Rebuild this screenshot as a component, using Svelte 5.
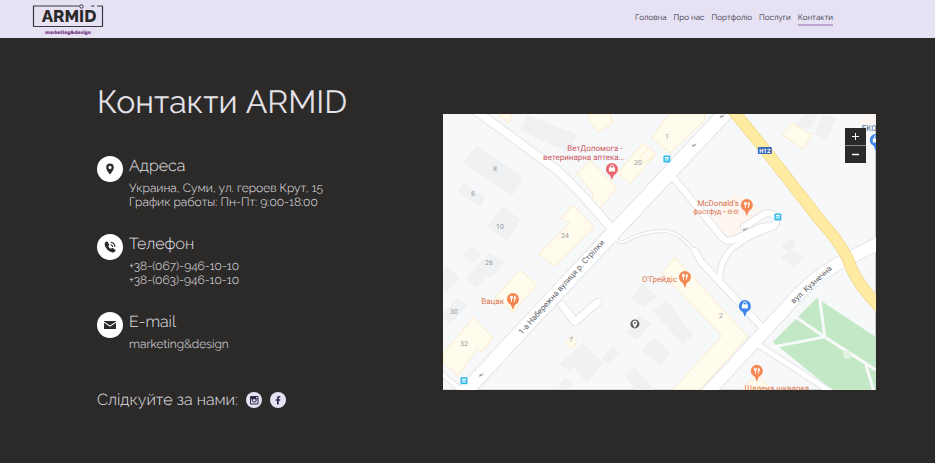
<script lang="ts">
  const links = ['Головна', 'Про нас', 'Портфоліо', 'Послуги', 'Контакти'];
  let current = $state('Контакти');
  let zoom = $state(1);

  const contacts = [
    {
      icon: 'pin',
      title: 'Адреса',
      lines: ['Украина, Суми, ул. героев Крут, 15', 'График работы: Пн-Пт: 9:00-18:00'],
    },
    { icon: 'phone', title: 'Телефон', lines: ['+38-(067)-946-10-10', '+38-(063)-946-10-10'] },
    { icon: 'mail', title: 'E-mail', lines: ['marketing&design'] },
  ];

  const greyBuildings = [
    '34,31 80,64 69,82 20,49',
    '20,69 43,83 38,93 14,78',
    '60,93 78,106 64,127 44,113',
    '85,1 136,21 125,38 77,16',
    '47,139 62,148 47,164 32,153',
    '30,132 39,141 30,149 20,141',
    '34,153 44,163 33,174 23,164',
    '4,153 17,163 4,178 0,176 0,156',
    '14,184 24,191 7,211 0,204 0,200',
    '139,229 160,249 144,269 124,246',
    '124,241 133,249 127,258 116,250',
    '170,233 177,239 165,251 159,244',
    '200,169 214,183 200,194 189,183',
    '197,201 209,209 194,226 182,218',
    '224,186 250,221 240,231 209,196',
    '212,223 227,239 217,251 198,236',
    '192,253 211,276 193,276 182,262',
    '122,263 130,270 124,276 115,272',
    '362,0 375,0 367,16 352,11',
    '380,0 393,4 384,26 372,20',
    '347,136 362,143 352,154 338,144',
    '347,124 354,130 348,138 338,132',
  ];

  const yellowBuildings = [
    '148,47 174,74 157,94 149,86 151,81 134,59',
    '200,29 212,41 187,70 175,59',
    '145,3 155,18 170,9 167,0 147,0',
    '130,91 151,113 112,152 96,140 127,109 118,104',
    '55,0 66,9 69,0',
    '226,0 262,0 262,6 227,39 209,24',
    '207,33 212,40 202,49 197,43',
    '349,9 369,21 360,35 340,21',
    '77,156 94,171 70,198 52,184',
    '30,203 50,224 39,238 34,234 15,262 0,248 0,240 22,214',
    '129,222 134,228 129,235 122,229',
    '232,143 305,223 257,276 230,276 279,222 219,159',
    '314,259 328,276 300,276',
  ];

  const roads = [
    { d: 'M32 -4L114 56Q140 80 168 114', w: 8 },
    { d: 'M168 117Q175 132 183 127Q200 117 222 117Q238 119 250 136', w: 2 },
    { d: 'M119 191L132 208L155 188', w: 7 },
    { d: 'M229 62L278 122Q284 130 293 125L318 113L331 112Q339 100 323 99L301 113', w: 6 },
    { d: 'M277 169Q276 146 290 134Q306 121 331 113', w: 5 },
    { d: 'M252 137L259 149L320 214', w: 6 },
    { d: 'M308 226L388 278', w: 5 },
    { d: 'M-2 259L20 278', w: 4 },
    { d: 'M20 280L173 116L290 -9', w: 14 },
    { d: 'M262 282L357 179Q380 156 405 145L440 127', w: 12 },
  ];

  const houseNumbers = [
    { x: 52, y: 57, n: '8' },
    { x: 30, y: 82, n: '6' },
    { x: 57, y: 115, n: '10' },
    { x: 122, y: 124, n: '24' },
    { x: 195, y: 51, n: '20' },
    { x: 224, y: 25, n: '1' },
    { x: 46, y: 151, n: '26' },
    { x: 11, y: 200, n: '30' },
    { x: 21, y: 232, n: '32' },
    { x: 128, y: 228, n: '7' },
    { x: 278, y: 204, n: '2' },
  ];

  const pins = [
    { x: 169, y: 55, color: '#e9686f', kind: 'bag' },
    { x: 304, y: 91, color: '#f58752', kind: 'food' },
    { x: 70, y: 185, color: '#f58752', kind: 'food' },
    { x: 242, y: 163, color: '#f58752', kind: 'food' },
    { x: 314, y: 257, color: '#f58752', kind: 'food' },
    { x: 302, y: 192, color: '#3f86ec', kind: 'bag' },
    { x: 433, y: 26, color: '#3f86ec', kind: 'bag' },
  ];

  const stops = [[224, 45], [335, 103], [21, 267]];
  const arrows = [[252, 31], [280, 2], [303, 115], [39, 261]];
</script>

<header>
  <a class="logo" href="/" aria-label="ARMID marketing&design">
    <svg width="72" height="34" viewBox="0 0 72 34">
      <path d="M48 3H1.500V23.500H70.500V3H65M59 3h3.500" fill="none" stroke="#3b3744" stroke-width="1.200" />
      <text class="brand" x="37" y="19" text-anchor="middle">ARMID</text>
      <circle cx="49.500" cy="3.500" r="1.700" fill="#e6e2f4" stroke="#3b3744" />
      <text class="tagline" x="36" y="31" text-anchor="middle">marketing&amp;design</text>
    </svg>
  </a>
  <nav>
    {#each links as link}
      <a href="#{link}" class:active={link === current} onclick={() => (current = link)}>{link}</a>
    {/each}
  </nav>
</header>

<main>
  <section class="info">
    <h1>Контакти ARMID</h1>
    <div class="contacts">
      {#each contacts as contact}
        <div class="contact">
          <span class="badge">
            <svg width="26" height="26" viewBox="0 0 26 26">
              {#if contact.icon === 'pin'}
                <path fill-rule="evenodd" d="M13 7.500a3.800 3.800 0 0 0-3.800 3.800C9.200 14.500 13 18.500 13 18.500s3.800-4 3.800-7.200A3.800 3.800 0 0 0 13 7.500zm0 2.300a1.600 1.600 0 1 1 0 3.200 1.600 1.600 0 0 1 0-3.200z" />
              {:else if contact.icon === 'phone'}
                <path d="M8 8.600Q9.500 7 10.800 7.900L12.200 10.700Q12.200 11.700 11.200 12.300Q11.900 13.900 13.700 14.800Q14.700 13.700 15.800 14.100L18.500 16Q18.900 17.300 17 18.300Q14 19.200 10.600 16Q6.700 11.700 8 8.600z" />
                <path d="M13.500 10.500q2 .3 2.300 2.500M13.700 8.200q4 .5 4.300 4.800" fill="none" stroke="#2b2a28" stroke-width="1.100" />
              {:else}
                <path d="M7 9h12v.6l-6 3.900-6-3.900z" />
                <path d="M7 10.800l6 3.900 6-3.900V17H7z" />
              {/if}
            </svg>
          </span>
          <div class="details">
            <h2>{contact.title}</h2>
            {#each contact.lines as line}
              <p>{line}</p>
            {/each}
          </div>
        </div>
      {/each}
    </div>
    <div class="social">
      <span>Слідкуйте за нами:</span>
      <a href="#instagram" aria-label="Instagram">
        <svg width="16" height="16" viewBox="0 0 16 16">
          <path fill-rule="evenodd" d="M5 4h6.500a1 1 0 0 1 1 1v6.500a1 1 0 0 1-1 1H5a1 1 0 0 1-1-1V5a1 1 0 0 1 1-1zM5 7.300v4.200h6.500V7.300h-1a2.400 2.400 0 1 1-4.500 0zM10 4.900v1.400h1.500V4.900z" />
          <circle cx="8.200" cy="8.300" r="1.300" fill="#e6e2f4" />
        </svg>
      </a>
      <a href="#facebook" aria-label="Facebook">
        <svg width="16" height="16" viewBox="0 0 16 16">
          <path d="M7 12.500V8.700H5.700V7.200H7V6Q7 4 9 4h1.300v1.500H9.400q-.7 0-.7.700v1h1.600l-.2 1.500H8.700v3.800z" />
        </svg>
      </a>
    </div>
  </section>

  <section class="map">
    <svg class="canvas" viewBox="0 0 433 276" role="img" aria-label="Мапа">
      <rect width="433" height="276" fill="#f7f8fa" />
      <g transform="translate(216 138) scale({zoom}) translate(-216 -138)">
        {#each greyBuildings as points}
          <polygon {points} fill="#eff1f2" />
        {/each}
        <polygon points="292,79 324,98 285,126 267,106" fill="#fcf5f0" />
        <polygon points="424,0 433,0 433,12 414,9" fill="#fcf5f0" />
        {#each yellowBuildings as points}
          <polygon {points} fill="#fffbed" stroke="#fbe6c0" stroke-width="0.8" />
        {/each}

        <polygon points="374,184 330,228 389,276 433,276 433,223" fill="#c3e8c6" />
        <g fill="none" stroke="#f8fafa" stroke-width="3">
          <path d="M350 201L382 223L433 256M375 171L382 223L320 235M423 251L431 277" />
        </g>
        <circle cx="404" cy="241" r="4" fill="#e0f0e1" />

        {#each roads as road}
          <path class="road edge" d={road.d} stroke-width={road.w + 2} />
        {/each}
        {#each roads as road}
          <path class="road" d={road.d} stroke-width={road.w} />
        {/each}
        <path class="road highway-edge" d="M289 -5L324 38L377 106Q397 128 405 145Q412 168 437 193" />
        <path class="road highway" d="M289 -5L324 38L377 106Q397 128 405 145Q412 168 437 193" />

        {#each arrows as [x, y]}
          <path d="M{x - 3} {y + 2}l1-3 1 1 3-2-2 3z" fill="#9a9da2" />
        {/each}

        {#each houseNumbers as house}
          <text class="house" x={house.x} y={house.y}>{house.n}</text>
        {/each}

        <text class="street" transform="translate(79 221) rotate(-48)">1-а Набережна вулиця р. Стрілки</text>
        <text class="street" transform="translate(351 190) rotate(-42)">вул. Кузнечна</text>

        <text class="place red" x="152" y="37" text-anchor="middle">ВетДопомога -</text>
        <text class="place red" x="182" y="46" text-anchor="end">ветеринарна аптека...</text>
        <text class="place" x="296" y="92" text-anchor="end">McDonald's</text>
        <text class="place small" x="296" y="100" text-anchor="end">фастфуд • ⊖⊖</text>
        <text class="place" x="61" y="190" text-anchor="end">Вацак</text>
        <text class="place" x="234" y="168" text-anchor="end">О'Грейдіс</text>
        <text class="place" x="334" y="277" text-anchor="middle">Шалена шкварка</text>
        <text class="place blue" x="419" y="17">ЕКО</text>

        {#each pins as pin}
          <g transform="translate({pin.x} {pin.y})">
            <path d="M0 11L-2 6Q-6 4-6 0A6 6 0 0 1 6 0Q6 4 2 6z" fill={pin.color} />
            {#if pin.kind === 'food'}
              <path d="M-2.500-3v2.500h2V-3M-1.500-3v6M1.500 3v-6q1.300.5 1.300 3H1.500" fill="none" stroke="#fff" stroke-width="0.9" />
            {:else}
              <path d="M-3-1.500h6v4h-6z" fill="#fff" />
              <path d="M-1.500-1v-1.500a1.500 1.500 0 0 1 3 0V-1" fill="none" stroke="#fff" stroke-width="0.9" />
            {/if}
          </g>
        {/each}

        {#each stops as [x, y]}
          <g transform="translate({x} {y})">
            <rect x="-3.500" y="-3.500" width="7" height="7" rx="1" fill="#35bce9" />
            <path d="M-2-2h4v3.500h-4z" fill="#fff" />
            <path d="M-2 0h4" stroke="#35bce9" />
          </g>
        {/each}

        <rect x="315" y="33" width="14" height="7" rx="1" fill="#3568b8" />
        <text class="shield" x="322" y="39">Н12</text>

        <circle cx="192" cy="210" r="4.500" fill="#5c5c5c" />
        <path d="M192 214L190 210.500A2.400 2.400 0 1 1 194 210.500z" fill="#fff" />
        <circle cx="192" cy="209" r="1" fill="#5c5c5c" />
      </g>
    </svg>
    <div class="zoom">
      <button aria-label="Збільшити" onclick={() => (zoom = Math.min(zoom + 0.25, 3))}>
        <svg width="7" height="7" viewBox="0 0 7 7"><path d="M3.500 0v7M0 3.500h7" /></svg>
      </button>
      <button aria-label="Зменшити" onclick={() => (zoom = Math.max(zoom - 0.25, 1))}>
        <svg width="7" height="7" viewBox="0 0 7 7"><path d="M0 3.500h7" stroke-width="1.500" /></svg>
      </button>
    </div>
  </section>
</main>

<style>
  :global(body) {
    background: #fff;
    font-family: Raleway, Lato, sans-serif;
    text-rendering: geometricPrecision;
  }

  header {
    display: flex;
    justify-content: space-between;
    align-items: center;
    height: 38px;
    padding: 2px 102px 0 32px;
    background: #e6e2f4;
    box-sizing: border-box;
  }

  .logo {
    display: flex;
  }

  .brand {
    font-size: 17px;
    font-weight: 800;
    fill: #2b2a28;
  }

  .tagline {
    font-size: 5px;
    font-weight: 900;
    fill: #7a3f85;
  }

  nav {
    display: flex;
    gap: 7px;
    padding-bottom: 6px;
  }

  nav a {
    padding: 3px 0 2px;
    border-bottom: 2px solid transparent;
    font-size: 8px;
    line-height: 10px;
    color: #2d2a38;
    text-decoration: none;
  }

  nav a.active {
    border-color: #bda5cf;
  }

  main {
    display: grid;
    grid-template-columns: 4fr 5fr;
    align-items: start;
    padding: 45px 59px 54px 97px;
    background: #2b2a28;
    color: #e6e2ea;
  }

  h1, h2, p {
    margin: 0;
    font-weight: 300;
  }

  h1 {
    font-size: 32px;
    line-height: 40px;
    font-weight: 400;
  }

  .contacts {
    display: flex;
    flex-direction: column;
    gap: 25px;
    margin: 33px 0 40px;
  }

  .contact {
    display: flex;
    gap: 6px;
  }

  .badge {
    width: 26px;
    height: 26px;
    border-radius: 50%;
    background: #fff;
    flex-shrink: 0;
  }

  .badge svg {
    display: block;
    fill: #2b2a28;
  }

  h2 {
    margin-bottom: 5px;
    font-size: 16px;
    line-height: 20px;
  }

  p {
    font-size: 12px;
    line-height: 14px;
  }

  .social {
    display: flex;
    align-items: center;
    gap: 8px;
    font-size: 16px;
    font-weight: 300;
    line-height: 18px;
  }

  .social a {
    width: 16px;
    height: 16px;
    border-radius: 50%;
    background: #e6e2f4;
  }

  .social svg {
    display: block;
    fill: #2d2a45;
  }

  .map {
    position: relative;
    margin-top: 31px;
  }

  .canvas {
    display: block;
    width: 100%;
    font-family: Roboto, sans-serif;
  }

  .road {
    fill: none;
    stroke: #fff;
    stroke-linecap: round;
    stroke-linejoin: round;
  }

  .edge {
    stroke: #e2e5e8;
  }

  .highway-edge {
    stroke: #f2da94;
    stroke-width: 12px;
  }

  .highway {
    stroke: #ffeba1;
    stroke-width: 10px;
  }

  .house {
    font-size: 7px;
    fill: #979a9e;
    text-anchor: middle;
  }

  .street {
    font-size: 8px;
    fill: #606368;
  }

  .place {
    font-size: 8px;
    fill: #dd744c;
  }

  .small {
    font-size: 7px;
  }

  .red {
    fill: #cb5a5e;
  }

  .blue {
    fill: #44688f;
  }

  .shield {
    font-size: 6px;
    font-weight: 700;
    fill: #fff;
    text-anchor: middle;
  }

  .zoom {
    position: absolute;
    top: 14px;
    right: 10px;
    display: flex;
    flex-direction: column;
    gap: 1px;
    background: #8b8791;
  }

  .zoom button {
    display: flex;
    align-items: center;
    justify-content: center;
    width: 21px;
    height: 17px;
    padding: 0;
    border: none;
    background: #2b2a28;
    cursor: pointer;
  }

  .zoom svg {
    stroke: #fff;
    fill: none;
  }
</style>
